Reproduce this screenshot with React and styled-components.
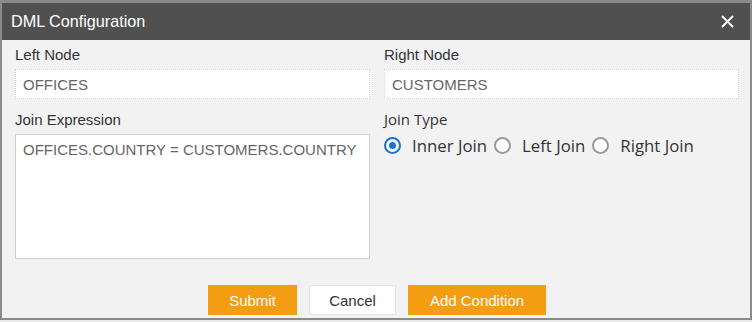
import React from 'react';
import styled, { createGlobalStyle } from 'styled-components';

const GlobalStyle = createGlobalStyle`
  html, body {
    margin: 0;
    padding: 0;
    background: #e9e9e9;
  }
  body {
    width: 752px;
    height: 322px;
    overflow: hidden;
    font-family: "Liberation Sans", Arial, sans-serif;
  }
`;

const Dialog = styled.div`
  width: 752px;
  height: 320px;
  box-sizing: border-box;
  border: 2px solid #8a8a8a;
  border-top-width: 3px;
  display: flex;
  flex-direction: column;
  background: #f2f2f2;
`;

const Header = styled.div`
  height: 37px;
  background: #505050;
  display: flex;
  align-items: center;
  justify-content: space-between;
  padding: 0 16px 0 9px;
`;

const Title = styled.div`
  color: #fff;
  font-size: 16.2px;
  margin-top: -1px;
`;

const Close = styled.div`
  display: flex;
  align-items: center;
  margin-top: -1px;
`;

const Body = styled.div`
  flex: 1;
  display: flex;
  flex-direction: column;
  padding: 6px 11px 0 13px;
`;

const Grid = styled.div`
  display: grid;
  grid-template-columns: 355px 355px;
  column-gap: 14px;
  row-gap: 12px;
`;

const Field = styled.div`
  display: flex;
  flex-direction: column;
`;

const Label = styled.div`
  font-size: 15px;
  color: #333;
  height: 17px;
  line-height: 17px;
  margin-bottom: 6px;
`;

const TypeLabel = styled.div`
  font-family: "Open Sans", "Noto Sans", sans-serif;
  font-size: 15px;
  color: #333;
  height: 17px;
  line-height: 17px;
  margin: 0 0 6px;
`;

const Input = styled.div`
  height: 30px;
  box-sizing: border-box;
  background: #fff;
  border: 1px dotted #d6d6d6;
  padding: 0 7px;
  display: flex;
  align-items: center;
  font-size: 15px;
  color: #666;
`;

const TextArea = styled.div`
  height: 125px;
  box-sizing: border-box;
  background: #fff;
  border: 1px solid #cfcfcf;
  padding: 6px 7px;
  font-size: 15px;
  color: #666;
`;

const RadioRow = styled.div`
  display: flex;
  align-items: center;
  gap: 7px;
`;

const RadioItem = styled.label`
  display: flex;
  align-items: center;
  gap: 11px;
`;

const RadioCircle = styled.span`
  width: 17px;
  height: 17px;
  box-sizing: border-box;
  border-radius: 50%;
  background: #fff;
  border: 2px solid ${props => (props.$checked ? '#1a73d0' : '#9a9a9a')};
  position: relative;
  ${props =>
    props.$checked &&
    `
    &::after {
      content: '';
      position: absolute;
      left: 3px;
      top: 3px;
      width: 7px;
      height: 7px;
      border-radius: 50%;
      background: #1a73d0;
    }
  `}
`;

const RadioLabel = styled.span`
  font-family: "Open Sans", "Noto Sans", sans-serif;
  font-size: 16.8px;
  color: #333;
`;

const Footer = styled.div`
  display: flex;
  justify-content: center;
  gap: 12px;
  margin-top: auto;
  padding-bottom: 3px;
`;

const Button = styled.button`
  height: 30px;
  width: ${props => (props.$wide ? '138px' : props.$primary ? '89px' : '87px')};
  box-sizing: border-box;
  font-family: "Liberation Sans", Arial, sans-serif;
  font-size: 15px;
  border: 1px solid ${props => (props.$primary ? '#f49d12' : '#e3e3e3')};
  background: ${props => (props.$primary ? '#f49d12' : '#fff')};
  color: ${props => (props.$primary ? '#fff' : '#333')};
  padding: 0;
`;

function Radio({ label, checked }) {
  return (
    <RadioItem>
      <RadioCircle $checked={checked} />
      <RadioLabel>{label}</RadioLabel>
    </RadioItem>
  );
}

function App() {
  return (
    <>
      <GlobalStyle />
      <Dialog>
        <Header>
          <Title>DML Configuration</Title>
          <Close aria-label="close">
            <svg width="13" height="13" viewBox="0 0 13 13">
              <path d="M1 1 L12 12 M12 1 L1 12" stroke="#fff" strokeWidth="1.8" />
            </svg>
          </Close>
        </Header>
        <Body>
          <Grid>
            <Field>
              <Label>Left Node</Label>
              <Input>OFFICES</Input>
            </Field>
            <Field>
              <Label>Right Node</Label>
              <Input>CUSTOMERS</Input>
            </Field>
            <Field>
              <Label>Join Expression</Label>
              <TextArea>OFFICES.COUNTRY = CUSTOMERS.COUNTRY</TextArea>
            </Field>
            <Field>
              <TypeLabel>Join Type</TypeLabel>
              <RadioRow>
                <Radio label="Inner Join" checked />
                <Radio label="Left Join" />
                <Radio label="Right Join" />
              </RadioRow>
            </Field>
          </Grid>
          <Footer>
            <Button $primary>Submit</Button>
            <Button>Cancel</Button>
            <Button $primary $wide>Add Condition</Button>
          </Footer>
        </Body>
      </Dialog>
    </>
  );
}

export default App;
